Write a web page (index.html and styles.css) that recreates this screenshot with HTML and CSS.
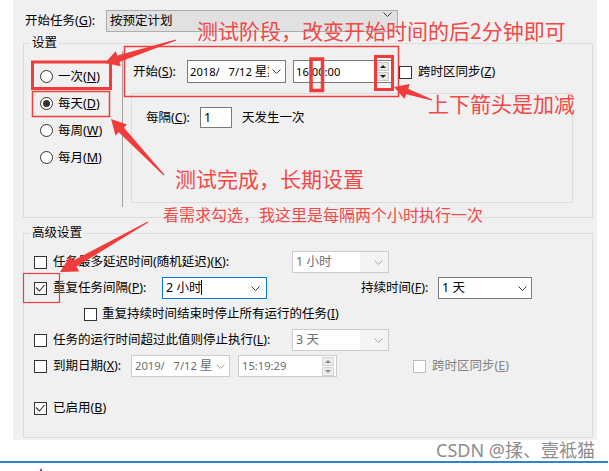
FILE: index.html
```html
<!DOCTYPE html>
<html lang="zh-CN">
<head>
    <meta charset="UTF-8">
    <meta name="viewport" content="width=device-width, initial-scale=1.0">
    <title>触发器 - 设置</title>
    <link rel="stylesheet" href="styles.css">
</head>
<body>
    <div class="panel">
        <div class="task-row">
            <span class="task-lbl">开始任务(<u>G</u>):</span>
            <div class="combo combo-task">
                <span>按预定计划</span>
                <svg class="chev chev-top" width="9" height="5" viewBox="0 0 9 5"><polyline points="0.5,0.5 4.5,4.5 8.5,0.5"/></svg>
            </div>
        </div>

        <fieldset class="group group-set">
            <legend>设置</legend>
            <div class="set-body">
                <div class="freq">
                    <div class="radio-row"><span class="radio"></span>一次(<u>N</u>)</div>
                    <div class="radio-row"><span class="radio on"></span>每天(<u>D</u>)</div>
                    <div class="radio-row"><span class="radio"></span>每周(<u>W</u>)</div>
                    <div class="radio-row"><span class="radio"></span>每月(<u>M</u>)</div>
                </div>
                <div class="detail">
                    <div class="start-row">
                        <span class="start-lbl">开始(<u>S</u>):</span>
                        <div class="field date">
                            <span class="val">2018/   7/12 <span class="cjk">星期四</span></span>
                            <svg class="chev" width="9" height="5" viewBox="0 0 9 5"><polyline points="0.5,0.5 4.5,4.5 8.5,0.5"/></svg>
                        </div>
                        <div class="field time">
                            <span class="val">16:00:00</span>
                            <div class="spin"><span class="up"></span><span class="down"></span></div>
                        </div>
                        <span class="check zone-check"></span>
                        <span class="txt">跨时区同步(<u>Z</u>)</span>
                    </div>
                    <div class="daily">
                        <span class="every-lbl">每隔(<u>C</u>):</span>
                        <div class="field num">1</div>
                        <span class="every-txt">天发生一次</span>
                    </div>
                </div>
            </div>
        </fieldset>

        <fieldset class="group group-adv">
            <legend>高级设置</legend>
            <div class="adv-body">
                <div class="row">
                    <span class="check"></span>
                    <span class="txt lbl-long">任务最多延迟时间(随机延迟)(<u>K</u>):</span>
                    <div class="combo dis-combo">
                        <span class="val">1 小时</span>
                        <svg class="chev" width="9" height="5" viewBox="0 0 9 5"><polyline points="0.5,0.5 4.5,4.5 8.5,0.5"/></svg>
                    </div>
                </div>
                <div class="row">
                    <span class="check on"><svg width="11" height="11" viewBox="0 0 11 11"><polyline points="1,4.5 4.5,8 9.5,2"/></svg></span>
                    <span class="txt lbl-repeat">重复任务间隔(<u>P</u>):</span>
                    <div class="combo edit-combo">
                        <span class="val">2 小时<i class="caret"></i></span>
                        <svg class="chev" width="9" height="5" viewBox="0 0 9 5"><polyline points="0.5,0.5 4.5,4.5 8.5,0.5"/></svg>
                    </div>
                    <span class="lbl-dur">持续时间(<u>F</u>):</span>
                    <div class="combo dur-combo">
                        <span class="val">1 天</span>
                        <svg class="chev" width="9" height="5" viewBox="0 0 9 5"><polyline points="0.5,0.5 4.5,4.5 8.5,0.5"/></svg>
                    </div>
                </div>
                <div class="row">
                    <span class="check sub-check"></span>
                    <span class="sub-txt">重复持续时间结束时停止所有运行的任务(<u>I</u>)</span>
                </div>
                <div class="row">
                    <span class="check"></span>
                    <span class="txt lbl-long">任务的运行时间超过此值则停止执行(<u>L</u>):</span>
                    <div class="combo dis-combo">
                        <span class="val">3 天</span>
                        <svg class="chev" width="9" height="5" viewBox="0 0 9 5"><polyline points="0.5,0.5 4.5,4.5 8.5,0.5"/></svg>
                    </div>
                </div>
                <div class="row">
                    <span class="check"></span>
                    <span class="txt lbl-expire">到期日期(<u>X</u>):</span>
                    <div class="field date dis">
                        <span class="val">2019/   7/12 <span class="cjk">星期五</span></span>
                        <svg class="chev" width="9" height="5" viewBox="0 0 9 5"><polyline points="0.5,0.5 4.5,4.5 8.5,0.5"/></svg>
                    </div>
                    <div class="field time dis">
                        <span class="val">15:19:29</span>
                        <div class="spin"><span class="up"></span><span class="down"></span></div>
                    </div>
                    <span class="check off exp-zone"></span>
                    <span class="txt off-txt">跨时区同步(<u>E</u>)</span>
                </div>
                <div class="row row-enabled">
                    <span class="check on"><svg width="11" height="11" viewBox="0 0 11 11"><polyline points="1,4.5 4.5,8 9.5,2"/></svg></span>
                    <span class="txt">已启用(<u>B</u>)</span>
                </div>
            </div>
        </fieldset>
    </div>
    <div class="footer">CSDN @揉、壹袛猫</div>
    <div class="rule"></div>
    <div class="dot"></div>

    <!-- 标注层 -->
    <div class="annot">
        <svg width="609" height="471" viewBox="0 0 609 471">
            <g class="marks">
                <rect x="32.5" y="62" width="78" height="26.5" stroke-width="3"/>
                <rect x="32.5" y="91.5" width="77" height="25" stroke-width="1.5"/>
                <rect x="124.5" y="46.5" width="274" height="50" stroke-width="1.5"/>
                <rect x="311" y="59" width="11.5" height="31.5" stroke-width="3.5"/>
                <rect x="375.5" y="56.5" width="17" height="33" stroke-width="3"/>
                <rect x="23.5" y="273.5" width="36" height="29" stroke-width="1.2"/>
            </g>
            <g class="arrows">
                <polygon points="105,63 120.8,66.3 119.4,62 176.2,40.5 175.8,39.5 117.2,55.4 115.8,51.1"/>
                <polygon points="111,119 127.1,124.4 123.8,127.5 164.4,174.6 163.6,175.4 118.8,132.3 115.5,135.4"/>
                <polygon points="394,87 409.8,83.9 408.2,88.7 432.2,99.5 431.8,100.5 406.2,94.3 404.6,99.1"/>
                <polygon points="60,272 79.2,271.4 76.5,266.6 148.2,222.4 147.8,221.6 73.1,260.6 70.4,255.8"/>
            </g>
        </svg>
        <span class="note note-stage">测试阶段，改变开始时间的后2分钟即可</span>
        <span class="note note-spin">上下箭头是加减</span>
        <span class="note note-done">测试完成，长期设置</span>
        <span class="note note-small">看需求勾选，我这里是每隔两个小时执行一次</span>
    </div>
</body>
</html>
```

FILE: styles.css
```css
body{
    margin: 0;
    width: 609px;
    height: 471px;
    position: relative;
    overflow: hidden;
    background: #fff;
    font-family: "Noto Sans", "Noto Sans CJK SC", sans-serif;
    font-size: 12.5px;
    line-height: 16px;
    color: #000;
}
u{
    text-underline-offset: 1px;
}
.panel{
    margin-left: 13px;
    width: 584px;
    height: 440px;
    padding-top: 10px;
    box-sizing: border-box;
    background: #f0f0f0;
}

/* 开始任务 */
.task-row{
    display: flex;
    align-items: center;
    height: 22px;
    padding-left: 12px;
}
.task-lbl{
    width: 81px;
}
.combo{
    display: flex;
    align-items: center;
    box-sizing: border-box;
    height: 22px;
    border: 1px solid #adadad;
    background: #e1e1e1;
    padding: 0 5px 0 3px;
}
.combo .val{
    flex: 1;
    white-space: pre;
}
.combo-task{
    width: 292px;
    justify-content: space-between;
}
.chev{
    flex: none;
}
.chev polyline{
    fill: none;
    stroke: #3c3c3c;
    stroke-width: 1;
}
.chev-top{
    align-self: flex-start;
    margin-top: 1px;
}

/* 分组框 */
.group{
    margin: 0 0 0 10px;
    padding: 0;
    width: 570px;
    box-sizing: border-box;
    border: 1px solid #dcdcdc;
    min-inline-size: 0;
}
.group legend{
    margin-left: 6px;
    padding: 0 2px;
    line-height: 16px;
}
.group-set{
    margin-top: 3px;
}
.set-body{
    display: flex;
    height: 166px;
}
.freq{
    width: 99px;
    box-sizing: border-box;
    padding: 12px 0 0 16px;
    margin-bottom: 10px;
    border-right: 1px solid #a0a0a0;
}
.radio-row{
    display: flex;
    align-items: center;
    height: 27px;
}
.radio{
    width: 13px;
    height: 13px;
    box-sizing: border-box;
    border: 1px solid #333;
    border-radius: 50%;
    background: #fff;
    margin-right: 5px;
    display: flex;
    align-items: center;
    justify-content: center;
}
.radio.on::after{
    content: '';
    width: 7px;
    height: 7px;
    border-radius: 50%;
    background: #333;
}
.detail{
    flex: 1;
    padding-left: 10px;
}
.start-row{
    display: flex;
    align-items: center;
    height: 23px;
    margin-top: 9px;
}
.start-lbl{
    width: 54px;
}
.field{
    display: flex;
    align-items: center;
    box-sizing: border-box;
    height: 23px;
    border: 1px solid #7a7a7a;
    background: #fff;
}
.field .val{
    flex: 1;
    overflow: hidden;
    white-space: pre;
    font-size: 11.2px;
}
.field .cjk{
    font-size: 12.5px;
}
.date{
    width: 99px;
    padding: 0 4px 0 2px;
}
.date .val{
    margin-right: 3px;
}
.time{
    width: 99px;
    margin-left: 7px;
    padding: 0 2px 0 2px;
}
.spin{
    display: flex;
    flex-direction: column;
    gap: 1px;
}
.spin span{
    width: 12px;
    height: 9px;
    box-sizing: border-box;
    border: 1px solid #c8c8c8;
    background: #e6e6e6;
    display: flex;
    align-items: center;
    justify-content: center;
}
.spin .up::after,
.spin .down::after{
    content: '';
    border-left: 3px solid transparent;
    border-right: 3px solid transparent;
}
.spin .up::after{
    border-bottom: 3px solid #222;
}
.spin .down::after{
    border-top: 3px solid #222;
}
.zone-check{
    margin: 1px 0 0 7px;
}
.daily{
    margin: 10px 0 0 -2px;
    width: 442px;
    height: 110px;
    box-sizing: border-box;
    border: 1px solid #dcdcdc;
    padding: 13px 0 0 14px;
    display: flex;
    align-items: center;
    align-content: flex-start;
    flex-wrap: wrap;
}
.every-lbl{
    width: 54px;
}
.num{
    width: 32px;
    height: 21px;
    padding-left: 3px;
}
.every-txt{
    margin-left: 10px;
}

/* 高级设置 */
.group-adv{
    margin-top: 7px;
}
.adv-body{
    height: 196px;
    box-sizing: border-box;
    padding: 9px 0 0 10px;
    display: flex;
    flex-direction: column;
    gap: 2px;
}
.row{
    display: flex;
    align-items: center;
    height: 24px;
}
.row-enabled{
    margin-top: 16px;
}
.check{
    flex: none;
    width: 13px;
    height: 13px;
    box-sizing: border-box;
    border: 1px solid #333;
    background: #fff;
    display: flex;
    align-items: center;
    justify-content: center;
}
.check polyline{
    fill: none;
    stroke: #333;
    stroke-width: 1.1;
}
.check.off{
    border-color: #bcbcbc;
}
.txt{
    margin-left: 6px;
}
.lbl-long{
    width: 239px;
}
.lbl-repeat{
    width: 109px;
}
.lbl-expire{
    width: 78px;
}
.dis-combo{
    width: 97px;
    border-color: #cccccc;
    background: #f4f4f4;
    color: #6d6d6d;
    padding-left: 0;
}
.dis-combo .val{
    align-self: stretch;
    background: #fff;
    padding-left: 3px;
    line-height: 20px;
    margin-right: 14px;
}
.dis-combo .chev polyline,
.dis .chev polyline{
    stroke: #a8a8a8;
}
.edit-combo{
    width: 105px;
    border-color: #0078d7;
    background: #fff;
    padding-right: 6px;
}
.caret{
    display: inline-block;
    width: 1px;
    height: 15px;
    background: #000;
    vertical-align: -3px;
}
.lbl-dur{
    margin-left: 94px;
    width: 77px;
}
.dur-combo{
    width: 94px;
    border-color: #7a7a7a;
    background: #fff;
    padding-right: 4px;
}
.sub-check{
    margin-left: 50px;
}
.sub-txt{
    margin-left: 5px;
}
.field.dis{
    height: 22px;
    border-color: #cccccc;
    color: #6d6d6d;
}
.row .date{
    padding-left: 3px;
}
.row .time{
    margin-left: 8px;
    padding-left: 3px;
}
.field.dis .spin span{
    border-color: #d4d4d4;
    background: #ececec;
}
.field.dis .spin .up::after{
    border-bottom-color: #8a8a8a;
}
.field.dis .spin .down::after{
    border-top-color: #8a8a8a;
}
.exp-zone{
    margin-left: 76px;
}
.off-txt{
    color: #838383;
}

/* 页脚 */
.footer{
    height: 21px;
    line-height: 21px;
    font-size: 18px;
    text-align: right;
    padding-right: 14px;
    color: #8c8c8c;
}
.rule{
    height: 2px;
    margin-right: 1px;
    background: #2a84d2;
}
.dot{
    width: 2px;
    height: 2px;
    margin: 6px 0 0 40px;
    background: #8a3fc4;
}

/* 标注 */
.annot{
    position: absolute;
    left: 0;
    top: 0;
    width: 609px;
    height: 471px;
    pointer-events: none;
}
.annot svg{
    position: absolute;
    left: 0;
    top: 0;
}
.marks rect{
    fill: none;
    stroke: #f03c3c;
}
.arrows polygon{
    fill: #f03c3c;
}
.note{
    position: absolute;
    font-family: "Noto Sans CJK SC", sans-serif;
    font-size: 21px;
    line-height: 21px;
    color: #f24848;
    white-space: nowrap;
}
.note-stage{
    left: 197px;
    top: 20px;
}
.note-spin{
    left: 428px;
    top: 93px;
}
.note-done{
    left: 175px;
    top: 168px;
}
.note-small{
    left: 163px;
    top: 206px;
    font-size: 16px;
    line-height: 16px;
}
```
